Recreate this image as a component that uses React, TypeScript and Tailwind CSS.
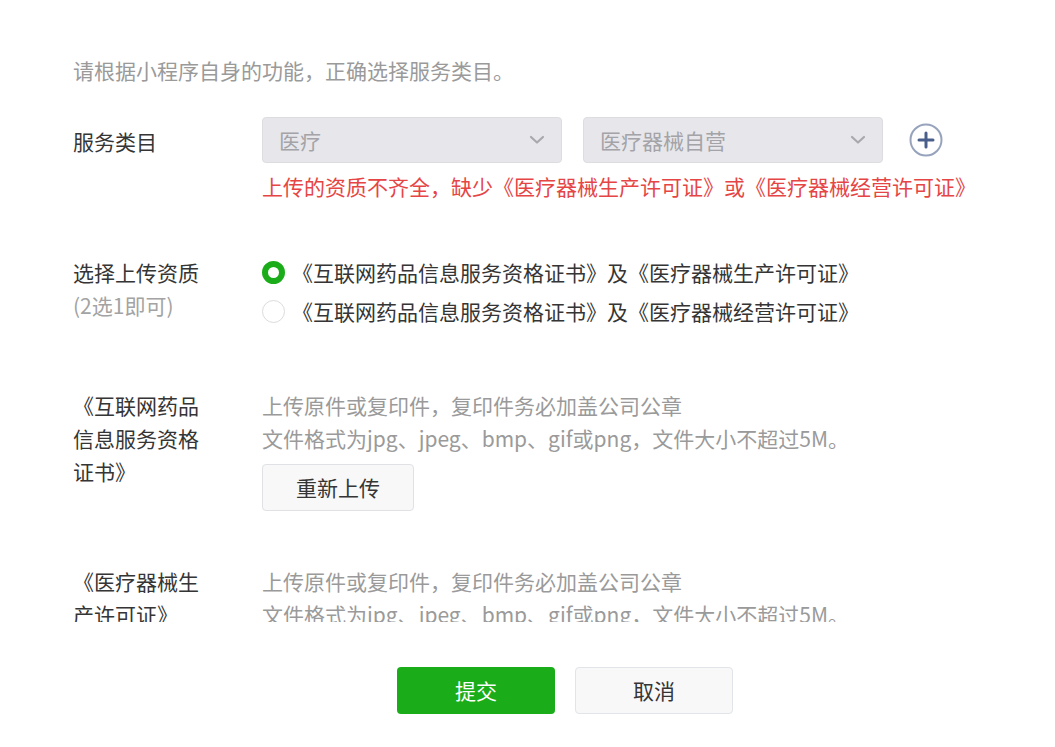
import React from "react";

const labelCls = "w-[189px] shrink-0 pr-[55px] text-[#353535]";

const Chevron = () => (
  <svg width="16" height="10" viewBox="0 0 16 10" className="shrink-0">
    <path d="M2 2 L8 7.5 L14 2" fill="none" stroke="#a8a8ad" strokeWidth="2.2" strokeLinecap="round" strokeLinejoin="round" />
  </svg>
);

const Select = ({ value }: { value: string }) => (
  <div className="flex h-[46px] w-[300px] items-center justify-between rounded-[4px] border border-[#dcdce1] bg-[#e7e7eb] pl-[16px] pr-[16px] text-[#a3a3a8]">
    <span>{value}</span>
    <Chevron />
  </div>
);

const Radio = ({ checked, label }: { checked?: boolean; label: string }) => (
  <div className="flex h-[33px] items-center gap-[7px]">
    {checked ? (
      <span className="box-border h-[23px] w-[23px] shrink-0 rounded-full border-[6px] border-[#1aad19] bg-white" />
    ) : (
      <span className="box-border h-[23px] w-[23px] shrink-0 rounded-full border border-[#dcdcdc] bg-white" />
    )}
    <span className="text-[#353535]">{label}</span>
  </div>
);

const UploadHint = () => (
  <div className="text-[#9a9a9a]">
    <p>上传原件或复印件，复印件务必加盖公司公章</p>
    <p>文件格式为jpg、jpeg、bmp、gif或png，文件大小不超过5M。</p>
  </div>
);

export default function App() {
  return (
    <div
      className="flex h-[747px] w-full flex-col bg-white text-[21px] leading-[33px]"
      style={{ fontFamily: '"Noto Sans CJK SC", "Noto Sans", sans-serif' }}
    >
      <div className="h-[622px] shrink-0 overflow-hidden pl-[73px] pt-[54px]">
        <p className="text-[#9a9a9a]">请根据小程序自身的功能，正确选择服务类目。</p>

        {/* 服务类目 */}
        <div className="mt-[30px] flex items-start">
          <div className={labelCls + " pt-[8px]"}>服务类目</div>
          <div>
            <div className="flex items-center">
              <Select value="医疗" />
              <div className="ml-[21px]">
                <Select value="医疗器械自营" />
              </div>
              <svg width="34" height="34" viewBox="0 0 34 34" className="ml-[26px]">
                <circle cx="17" cy="17" r="15.5" fill="none" stroke="#97a3bd" strokeWidth="2" />
                <path d="M17 10 V24 M10 17 H24" stroke="#4a5e8c" strokeWidth="3" strokeLinecap="round" />
              </svg>
            </div>
            <p className="mt-[7px] text-[#e64545]">
              上传的资质不齐全，缺少《医疗器械生产许可证》或《医疗器械经营许可证》
            </p>
          </div>
        </div>

        {/* 选择上传资质 */}
        <div className="mt-[53px] flex items-start">
          <div className={labelCls}>
            <p>选择上传资质</p>
            <p className="text-[#a3a3a3]">(2选1即可)</p>
          </div>
          <div className="flex flex-col gap-[6px]">
            <Radio checked label="《互联网药品信息服务资格证书》及《医疗器械生产许可证》" />
            <Radio label="《互联网药品信息服务资格证书》及《医疗器械经营许可证》" />
          </div>
        </div>

        {/* 证书 1 */}
        <div className="mt-[61px] flex items-start">
          <div className={labelCls}>《互联网药品信息服务资格证书》</div>
          <div>
            <UploadHint />
            <button className="mt-[9px] h-[47px] w-[152px] rounded-[4px] border border-[#dfe1e5] bg-[#f8f8f9] text-[#353535]">
              重新上传
            </button>
          </div>
        </div>

        {/* 证书 2 */}
        <div className="mt-[54px] flex items-start">
          <div className={labelCls}>《医疗器械生产许可证》</div>
          <UploadHint />
        </div>
      </div>

      <div className="flex gap-[20px] pl-[397px] pt-[45px]">
        <button className="h-[47px] w-[158px] rounded-[4px] bg-[#1aad19] text-white">提交</button>
        <button className="h-[47px] w-[158px] rounded-[4px] border border-[#e1e4e8] bg-[#f8f8f9] text-[#353535]">
          取消
        </button>
      </div>
    </div>
  );
}
